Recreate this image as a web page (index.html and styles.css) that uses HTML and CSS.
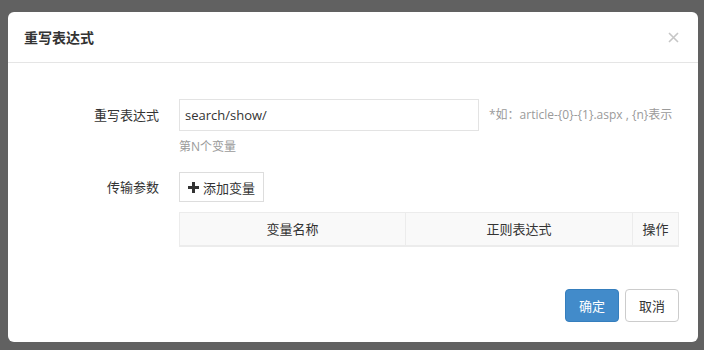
FILE: index.html
```html
<!DOCTYPE html>
<html lang="zh-CN">
<head>
  <meta charset="UTF-8" />
  <title>重写表达式</title>
  <link rel="stylesheet" href="styles.css">
</head>
<body>

  <div class="modal">
    <div class="modal-header">
      <h4 class="modal-title">重写表达式</h4>
      <span class="close" title="关闭">
        <svg width="11" height="11" viewBox="0 0 11 11"><path d="M1 1l9 9M10 1l-9 9" stroke="#c6c6c6" stroke-width="1.6"/></svg>
      </span>
    </div>

    <div class="modal-body">
      <div class="form-row first-row">
        <label class="form-label first">重写表达式</label>
        <div class="form-field">
          <div class="input-line">
            <input type="text" class="input" value="search/show/">
            <span class="help nowrap">*如：article-{0}-{1}.aspx , {n}表示</span>
          </div>
          <div class="help help-next">第N个变量</div>
        </div>
      </div>

      <div class="form-row">
        <label class="form-label second">传输参数</label>
        <div class="form-field">
          <button class="btn-add">
            <svg width="11" height="11" viewBox="0 0 11 11"><path d="M4 0h3v4h4v3H7v4H4V7H0V4h4z" fill="#333"/></svg>
            添加变量
          </button>
          <table class="var-table">
            <thead>
              <tr>
                <th class="col-name">变量名称</th>
                <th class="col-regex">正则表达式</th>
                <th class="col-op">操作</th>
              </tr>
            </thead>
            <tbody></tbody>
          </table>
        </div>
      </div>
    </div>

    <div class="modal-footer">
      <button class="btn btn-primary">确定</button>
      <button class="btn btn-default">取消</button>
    </div>
  </div>

</body>
</html>
```

FILE: styles.css
```css
body {
  margin: 0;
  padding: 12px 6px 0 8px;
  height: 350px;
  box-sizing: border-box;
  background-color: #616161;
  font-family: "Open Sans", "Noto Sans CJK SC", sans-serif;
  font-size: 13px;
  color: #333;
  overflow: hidden;
}

.modal {
  background: #fff;
  border-radius: 6px;
  height: 330px;
  display: flex;
  flex-direction: column;
}

.modal-header {
  height: 51px;
  box-sizing: border-box;
  border-bottom: 1px solid #e5e5e5;
  display: flex;
  align-items: center;
  justify-content: space-between;
  padding: 0 19px 0 16px;
}

.modal-title {
  margin: 0;
  font-size: 14px;
  font-weight: bold;
  color: #333;
}

.close {
  display: flex;
  padding-top: 1px;
}

.modal-body {
  padding: 36px 19px 0 0;
  flex: 1;
}

.form-row {
  display: flex;
  gap: 20px;
  margin-bottom: 20px;
}

.form-row.first-row {
  margin-bottom: 15px;
}

.form-label {
  width: 151px;
  flex-shrink: 0;
  text-align: right;
}

.form-label.first {
  line-height: 32px;
}

.form-label.second {
  line-height: 30px;
}

.form-field {
  flex: 1;
  line-height: 20px;
}

.input-line {
  display: flex;
  align-items: center;
  gap: 10px;
}

.input {
  width: 300px;
  height: 32px;
  box-sizing: border-box;
  padding: 4px 5px;
  border: 1px solid #e3e3e3;
  font-family: inherit;
  font-size: 13px;
  color: #333;
}

.help {
  color: #9a9a9a;
  font-size: 12px;
}

.help-next {
  margin-top: 6px;
}

.nowrap {
  white-space: nowrap;
}

.btn-add {
  height: 30px;
  width: 85px;
  padding: 0;
  border: 1px solid #ddd;
  background: #fff;
  font-family: inherit;
  font-size: 13px;
  color: #333;
  display: flex;
  align-items: center;
  justify-content: center;
  gap: 4px;
  margin-bottom: 10px;
}

.var-table {
  width: 100%;
  border-collapse: collapse;
}

.var-table th {
  height: 33px;
  box-sizing: border-box;
  padding: 0;
  background-color: #f9f9f9;
  border: 1px solid #ececec;
  border-bottom-width: 2px;
  font-weight: normal;
  text-align: center;
}

.col-name {
  width: 226px;
}

.col-regex {
  width: 227px;
}

.modal-footer {
  display: flex;
  justify-content: flex-end;
  gap: 6px;
  padding: 0 19px 20px 0;
}

.btn {
  height: 33px;
  width: 54px;
  border-radius: 4px;
  font-family: inherit;
  font-size: 13px;
  cursor: pointer;
}

.btn-primary {
  background-color: #428bca;
  border: 1px solid #357ebd;
  color: #fff;
}

.btn-default {
  background-color: #fff;
  border: 1px solid #ccc;
  color: #333;
}
```
